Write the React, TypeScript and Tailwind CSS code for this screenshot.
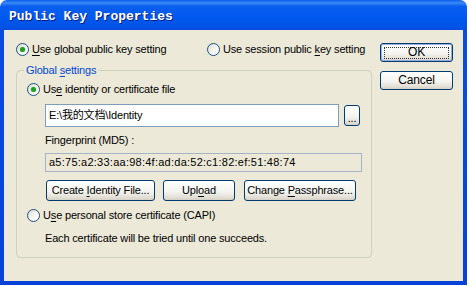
import type { ReactNode } from 'react';

const ui = "font-['Liberation_Sans',Tahoma,'Noto_Sans_CJK_SC',sans-serif] text-[11px] leading-[13px] tracking-[-0.17px] text-black";

function Radio({ checked, children }: { checked?: boolean; children: ReactNode }) {
  return (
    <div className="flex items-center h-[15px]">
      <span className="w-[13px] h-[13px] rounded-full border border-[#1C5180] bg-[linear-gradient(135deg,#DCDCD4,#FFFFFF_75%)] flex items-center justify-center shrink-0">
        {checked && <span className="w-[5px] h-[5px] rounded-full bg-[#21A121] shadow-[0_0_1px_#5BD35B]" />}
      </span>
      <span className="ml-[3px] whitespace-nowrap">{children}</span>
    </div>
  );
}

function Button({ children, width, height = 21, isDefault }: { children: ReactNode; width: number; height?: number; isDefault?: boolean }) {
  return (
    <button
      className={`flex items-center justify-center rounded-[3px] border border-[#003C74] bg-[linear-gradient(to_bottom,#FFFFFF,#F4F4F0_55%,#E3E0D6_85%,#D6D0C5)] ${isDefault ? 'shadow-[inset_0_0_0_1px_#97AEE2]' : ''}`}
      style={{ width, height }}
    >
      {isDefault ? (
        <span className="flex items-center justify-center w-[calc(100%-6px)] h-[calc(100%-5px)] border border-dotted border-[#333]">
          <span className="text-[12px]">{children}</span>
        </span>
      ) : (
        <span className="whitespace-nowrap">{children}</span>
      )}
    </button>
  );
}

function U({ children }: { children: ReactNode }) {
  return <span className="underline underline-offset-[2px]">{children}</span>;
}

export default function App() {
  return (
    <div className={`w-[469px] h-[286px] bg-white ${ui}`}>
      <div className="w-[467px] h-[285px] flex flex-col rounded-t-[7px] overflow-hidden bg-[linear-gradient(to_bottom,#0A5EEC,#3B8AF6_3px,#0A5FEF_6px,#0058EE_18px,#0054E6_26px,#0A4BE0_30px,#0842D8)]">
        <div className="h-[30px] flex items-center pl-[9px] pt-[2px] shrink-0">
          <span className="font-['Liberation_Mono',monospace] font-bold text-[13px] tracking-normal text-white [text-shadow:1px_1px_0_#0A1E82]">
            Public Key Properties
          </span>
        </div>

        <div className="flex-1 mx-[4px] mb-[4px] bg-[#ECE9D8] flex">
          <div className="ml-[12px] w-[356px] pt-[12px]">
            <div className="flex">
              <div className="w-[191px]">
                <Radio checked>
                  <U>U</U>se global public key setting
                </Radio>
              </div>
              <Radio>
                Use session public <U>k</U>ey setting
              </Radio>
            </div>

            <div className="relative mt-[13px] h-[188px] border border-[#D0D0BF] rounded-[4px] pl-[10px] pt-[11px]">
              <span className="absolute left-[7px] top-[-7px] px-[2px] bg-[#ECE9D8] text-[#0046D5]">
                Global <U>s</U>ettings
              </span>

              <Radio checked>
                Us<U>e</U> identity or certificate file
              </Radio>

              <div className="flex items-center ml-[18px] mt-[7px]">
                <div className="w-[294px] h-[23px] border border-[#7F9DB9] bg-white flex items-center pl-[3px]">
                  E:\我的文档\Identity
                </div>
                <div className="ml-[5px]">
                  <Button width={16} height={21}>
                    <span className="relative top-[3px]">...</span>
                  </Button>
                </div>
              </div>

              <div className="ml-[18px] mt-[7px] h-[13px]">Fingerprint (MD5) :</div>

              <div className="ml-[18px] mt-[6px] w-[317px] h-[19px] border border-[#A5B5C5] flex items-center pl-[3px] tracking-[0.25px]">
                a5:75:a2:33:aa:98:4f:ad:da:52:c1:82:ef:51:48:74
              </div>

              <div className="flex ml-[19px] mt-[8px] gap-[8px]">
                <Button width={109}>
                  Create <U>I</U>dentity File...
                </Button>
                <Button width={72}>
                  Upl<U>o</U>ad
                </Button>
                <div className="ml-[1px]">
                  <Button width={112}>
                    Change <U>P</U>assphrase...
                  </Button>
                </div>
              </div>

              <div className="mt-[7px]">
                <Radio>
                  U<U>s</U>e personal store certificate (CAPI)
                </Radio>
              </div>

              <div className="ml-[18px] mt-[9px] h-[13px]">Each certificate will be tried until one succeeds.</div>
            </div>
          </div>

          <div className="ml-[8px] pt-[13px] flex flex-col gap-[9px]">
            <Button width={73} height={19} isDefault>
              OK
            </Button>
            <Button width={73} height={19}>
              <span className="text-[12px]">Cancel</span>
            </Button>
          </div>
        </div>
      </div>
    </div>
  );
}
